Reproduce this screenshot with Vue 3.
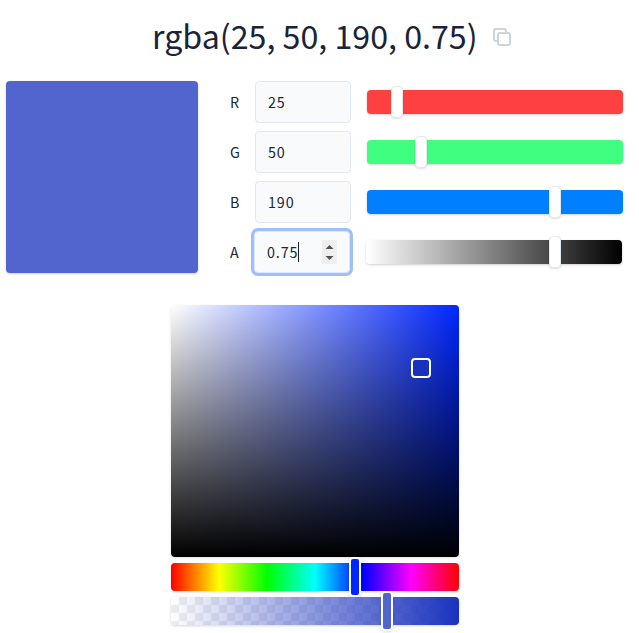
<script setup>
import { ref } from 'vue'

const channels = ref([
  { label: 'R', value: '25', position: 30, kind: 'red' },
  { label: 'G', value: '50', position: 54, kind: 'green' },
  { label: 'B', value: '190', position: 188, kind: 'blue' },
  { label: 'A', value: '0.75', position: 189, kind: 'alpha', focused: true },
])
</script>

<template>
  <main class="page">
    <header class="heading">
      <h1>rgba(25, 50, 190, 0.75)</h1>
      <button class="copy" aria-label="Copy">
        <svg width="18" height="18" viewBox="0 0 18 18" fill="none" stroke="currentColor" stroke-width="2" stroke-linejoin="round">
          <rect x="5" y="5" width="12" height="12" rx="2" />
          <path d="M5 13H3a2 2 0 0 1-2-2V3a2 2 0 0 1 2-2h8a2 2 0 0 1 2 2v2" />
        </svg>
      </button>
    </header>

    <section class="values">
      <div class="swatch"></div>
      <div class="channels">
        <div v-for="c in channels" :key="c.label" class="row" :class="c.kind">
          <span class="label">{{ c.label }}</span>
          <div class="field" :class="{ focused: c.focused }">
            <span class="number">{{ c.value }}</span>
            <i v-if="c.focused" class="caret"></i>
            <span v-if="c.focused" class="spinner">
              <svg width="15" height="24" viewBox="0 0 15 24" fill="#505050">
                <path d="M3.5 9h8l-4-4zM3.5 16h8l-4 4z" />
              </svg>
            </span>
          </div>
          <div class="slider">
            <i class="thumb" :style="{ left: c.position + 'px' }"></i>
          </div>
        </div>
      </div>
    </section>

    <section class="picker">
      <div class="plane"><i class="marker"></i></div>
      <div class="strip hue"><i class="handle hue-handle"></i></div>
      <div class="strip opacity"><i class="handle opacity-handle"></i></div>
    </section>
  </main>
</template>

<style>
body {
  background: #fff;
  overflow: hidden;
}
</style>

<style scoped>
* {
  box-sizing: border-box;
}
.page {
  width: 639px;
  height: 633px;
  color: #1a2338;
  font-family: "Noto Sans CJK SC", "Noto Sans", sans-serif;
}
.heading {
  display: flex;
  align-items: center;
  height: 81px;
  padding: 0 0 7px 152px;
}
h1 {
  width: 341px;
  margin: 0;
  padding-bottom: 4px;
  font-size: 32.2px;
  line-height: 50px;
  font-weight: 400;
  white-space: nowrap;
}
.copy {
  display: flex;
  padding: 0;
  border: 0;
  background: none;
  color: #cbd5e0;
}
.values {
  display: flex;
  height: 192px;
  padding-left: 6px;
}
.swatch {
  width: 192px;
  height: 192px;
  border-radius: 4px;
  background: #5265cf;
  box-shadow: 0 1px 3px rgba(0, 0, 0, 0.14), 0 1px 2px rgba(0, 0, 0, 0.06);
}
.channels {
  display: flex;
  flex-direction: column;
  gap: 8px;
  padding-left: 32px;
}
.row {
  display: flex;
  align-items: center;
  height: 42px;
}
.label {
  width: 25px;
  font-size: 14.3px;
  line-height: 24px;
}
.row.alpha .label {
  width: 24px;
}
.field {
  display: flex;
  align-items: center;
  width: 96px;
  height: 42px;
  margin-right: 16px;
  padding: 0 12px;
  border: 1px solid #e2e8f0;
  border-radius: 4px;
  background: #f8fafc;
}
.field.focused {
  box-shadow: 0 0 0 3px #9fbffa;
  border-color: #dce7fa;
}
.number {
  font-size: 14.3px;
  line-height: 24px;
  letter-spacing: 0.9px;
}
.caret {
  width: 1px;
  height: 20px;
  margin-left: -0.5px;
  background: #1a202c;
}
.spinner {
  display: flex;
  margin-left: auto;
  background: #efefef;
}
.slider {
  position: relative;
  width: 256px;
  height: 24px;
  border-radius: 4px;
  box-shadow: 0 1px 3px rgba(0, 0, 0, 0.14), 0 1px 2px rgba(0, 0, 0, 0.06);
}
.red .slider {
  background: #ff4040;
}
.green .slider {
  background: #40ff80;
}
.blue .slider {
  background: #0080ff;
}
.alpha .slider {
  background: linear-gradient(to right, #fff, #000);
}
.thumb {
  position: absolute;
  top: -4px;
  width: 12px;
  height: 32px;
  margin-left: -6px;
  border: 1px solid #e2e8f0;
  border-radius: 4px;
  background: #fff;
  box-shadow: 0 1px 2px rgba(0, 0, 0, 0.12);
}
.picker {
  display: flex;
  flex-direction: column;
  gap: 6px;
  width: 288px;
  margin: 32px 0 0 171px;
}
.plane {
  position: relative;
  height: 252px;
  border-radius: 4px;
  background: linear-gradient(to top, #000, transparent), linear-gradient(to right, #fff, #0026ff);
  box-shadow: 0 1px 3px rgba(0, 0, 0, 0.12);
}
.marker {
  position: absolute;
  left: 240px;
  top: 53px;
  width: 20px;
  height: 20px;
  border: 2px solid #fff;
  border-radius: 4px;
  background: #1932be;
}
.strip {
  position: relative;
  height: 28px;
  border-radius: 4px;
  box-shadow: 0 1px 3px rgba(0, 0, 0, 0.16);
}
.hue {
  background: linear-gradient(to right, #f00, #ff0 16.667%, #0f0 33.333%, #0ff 50%, #00f 66.667%, #f0f 83.333%, #f00);
}
.opacity {
  background:
    linear-gradient(to right, rgba(25, 50, 190, 0), rgb(25, 50, 190)),
    repeating-conic-gradient(#eee 0 25%, #fff 0 50%) 0 0 / 16px 16px;
}
.handle {
  position: absolute;
  top: -6px;
  width: 12px;
  height: 40px;
  border: 2px solid #fff;
  border-radius: 4px;
  box-shadow: 0 1px 3px rgba(0, 0, 0, 0.14);
}
.hue-handle {
  left: 178px;
  background: #0026ff;
}
.opacity-handle {
  left: 210px;
  background: #5265cf;
}
</style>
